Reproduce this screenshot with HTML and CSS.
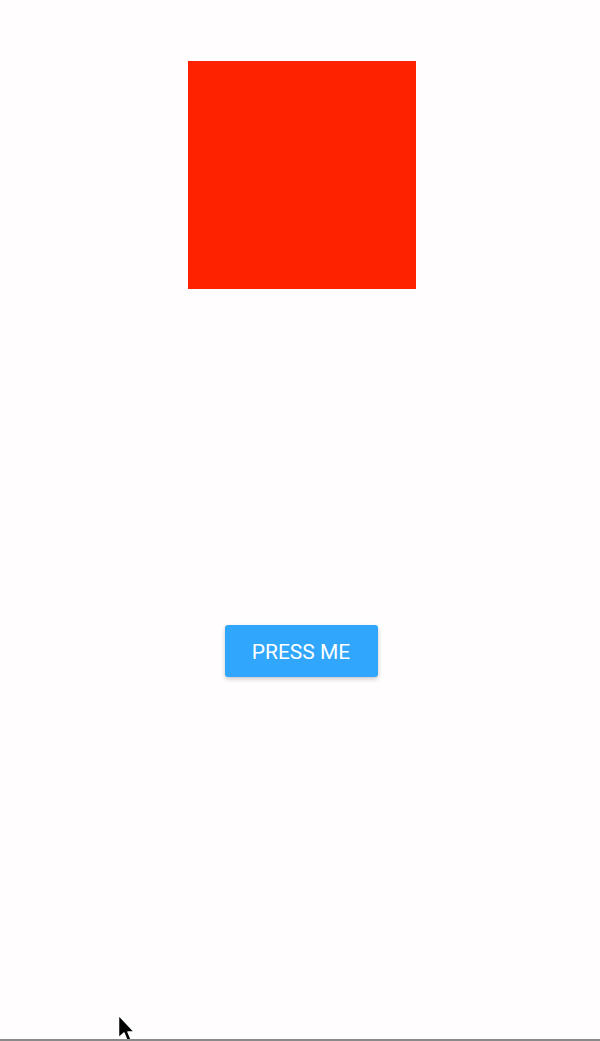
FILE: index.html
```html
<!DOCTYPE html>
<html>
<head>
<meta charset="utf-8">
<link rel="stylesheet" href="styles.css">
</head>
<body>
<div class="screen">
  <div class="box"></div>
  <button class="btn">PRESS ME</button>
  <div class="bottom-line"></div>
  <svg class="cursor" width="26" height="34" viewBox="0 0 26 34">
    <path d="M1.5 1 L1.5 24 L7 19 L11 29 L15 27.5 L11 18 L17.5 18 Z" fill="#000" stroke="#fff" stroke-width="1.5" stroke-linejoin="round"/>
  </svg>
</div>
</body>
</html>
```
FILE: styles.css
```css
html, body {
  margin: 0;
  padding: 0;
  background: #fffdfd;
}
.screen {
  position: relative;
  width: 600px;
  height: 1041px;
  display: flex;
  flex-direction: column;
  align-items: center;
  padding-left: 4px;
  box-sizing: border-box;
  overflow: hidden;
}
.box {
  width: 228px;
  height: 228px;
  margin-top: 61px;
  background: #ff2200;
}
.btn {
  margin-top: 336px;
  margin-right: 2px;
  width: 153px;
  height: 52px;
  border: none;
  border-radius: 3px;
  background: #30a6fd;
  color: #fff;
  font-family: Roboto, "Liberation Sans", sans-serif;
  font-size: 21px;
  letter-spacing: 0;
  padding: 2px 0 0 0;
  box-shadow: 0 2px 4px rgba(0,0,0,0.22);
}
.bottom-line {
  position: absolute;
  left: 0;
  right: 0;
  bottom: 0;
  height: 2px;
  background: #8a8a8a;
  z-index: 2;
}
.cursor {
  position: absolute;
  left: 117px;
  top: 1014px;
  z-index: 1;
}
```
